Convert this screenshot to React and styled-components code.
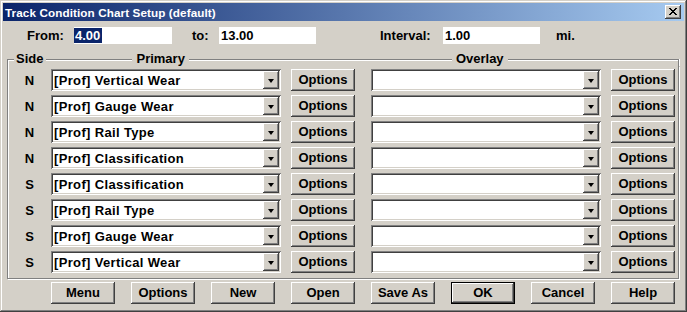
import React from "react";
import styled, { createGlobalStyle } from "styled-components";

const face = "#d4d0c8";

const raised = `
  box-shadow: inset -1px -1px #404040, inset 1px 1px #ffffff,
    inset -2px -2px #808080, inset 2px 2px ${face};
`;

const sunken = `
  box-shadow: inset 1px 1px #808080, inset -1px -1px #ffffff,
    inset 2px 2px #404040, inset -2px -2px ${face};
`;

const GlobalStyle = createGlobalStyle`
  html, body {
    margin: 0;
    padding: 0;
    background: ${face};
  }
  body {
    font-family: "Liberation Sans", Arial, sans-serif;
  }
`;

const rows = [
  ["N", "[Prof] Vertical Wear"],
  ["N", "[Prof] Gauge Wear"],
  ["N", "[Prof] Rail Type"],
  ["N", "[Prof] Classification"],
  ["S", "[Prof] Classification"],
  ["S", "[Prof] Rail Type"],
  ["S", "[Prof] Gauge Wear"],
  ["S", "[Prof] Vertical Wear"],
];

const footer = ["Menu", "Options", "New", "Open", "Save As", "OK", "Cancel", "Help"];

function CloseGlyph() {
  const cells = [
    [0, 0], [1, 0], [6, 0], [7, 0],
    [1, 1], [2, 1], [5, 1], [6, 1],
    [2, 2], [3, 2], [4, 2], [5, 2],
    [3, 3], [4, 3],
    [2, 4], [3, 4], [4, 4], [5, 4],
    [1, 5], [2, 5], [5, 5], [6, 5],
    [0, 6], [1, 6], [6, 6], [7, 6],
  ];
  return (
    <svg width="8" height="7" viewBox="0 0 8 7" shapeRendering="crispEdges">
      {cells.map(([x, y]) => (
        <rect key={`${x}-${y}`} x={x} y={y} width="1" height="1" fill="#000" />
      ))}
    </svg>
  );
}

export default function App() {
  return (
    <>
      <GlobalStyle />
      <Window>
        <TitleBar>
          <span>Track Condition Chart Setup (default)</span>
          <CloseBox>
            <CloseGlyph />
          </CloseBox>
        </TitleBar>

        <TopRow>
          <FieldLabel $w={47}>From:</FieldLabel>
          <TextField $w={98}>
            <Selected>4.00</Selected>
          </TextField>
          <FieldLabel $w={27} $ml={20}>to:</FieldLabel>
          <TextField $w={97}>13.00</TextField>
          <FieldLabel $w={63} $ml={64}>Interval:</FieldLabel>
          <TextField $w={97}>1.00</TextField>
          <FieldLabel $ml={16}>mi.</FieldLabel>
        </TopRow>

        <Group>
          <GroupHeader>
            <HeaderLine $w={7} $edge="left" />
            <HeaderLabel $pl={2} $pr={3}>Side</HeaderLabel>
            <HeaderLine $w={86} />
            <HeaderLabel $pl={4} $pr={4}>Primary</HeaderLabel>
            <HeaderLine $w={263} />
            <HeaderLabel $pl={4} $pr={4}>Overlay</HeaderLabel>
            <HeaderLine $edge="right" />
          </GroupHeader>
          <GroupBody>
            {rows.map(([side, name], i) => (
              <React.Fragment key={i}>
                <SideCell>{side}</SideCell>
                <Combo>
                  <ComboText>{name}</ComboText>
                  <DropButton>
                    <Arrow />
                  </DropButton>
                </Combo>
                <Button>Options</Button>
                <Combo>
                  <ComboText />
                  <DropButton>
                    <Arrow />
                  </DropButton>
                </Combo>
                <Button>Options</Button>
              </React.Fragment>
            ))}
          </GroupBody>
        </Group>

        <ButtonBar>
          {footer.map((label) => (
            <Button key={label} $default={label === "OK"}>
              {label}
            </Button>
          ))}
        </ButtonBar>
      </Window>
    </>
  );
}

const Window = styled.div`
  width: 687px;
  height: 312px;
  box-sizing: border-box;
  padding: 3px;
  background: ${face};
  box-shadow: inset -1px -1px #404040, inset 1px 1px ${face},
    inset -2px -2px #808080, inset 2px 2px #ffffff;
  display: flex;
  flex-direction: column;
  color: #000;
`;

const TitleBar = styled.div`
  height: 18px;
  display: flex;
  align-items: center;
  justify-content: space-between;
  padding: 0 3px 0 2px;
  background: linear-gradient(to right, #0a246a, #a6caf0);
  color: #ffffff;
  font-weight: bold;
  font-size: 11.7px;
  letter-spacing: 0.1px;
`;

const CloseBox = styled.div`
  width: 16px;
  height: 14px;
  box-sizing: border-box;
  background: ${face};
  ${raised}
  display: flex;
  align-items: center;
  justify-content: center;
  padding: 0 1px 1px 0;
`;

const TopRow = styled.div`
  display: flex;
  align-items: center;
  height: 17px;
  margin-top: 6px;
  padding-left: 24px;
`;

const FieldLabel = styled.div`
  width: ${(p) => (p.$w ? `${p.$w}px` : "auto")};
  margin-left: ${(p) => p.$ml || 0}px;
  font-weight: bold;
  font-size: 13px;
`;

const TextField = styled.div`
  width: ${(p) => p.$w}px;
  height: 17px;
  box-sizing: border-box;
  background: #ffffff;
  padding-left: 2px;
  display: flex;
  align-items: center;
  font-weight: bold;
  font-size: 13px;
`;

const Selected = styled.span`
  background: #0a246a;
  color: #ffffff;
  margin-left: -2px;
  padding: 0 2px 0 1px;
  line-height: 15px;
`;

const Group = styled.div`
  width: 672px;
  margin: 8px 0 0 4px;
`;

const GroupHeader = styled.div`
  display: flex;
  height: 14px;
`;

const HeaderLine = styled.div`
  ${(p) => (p.$w ? `width: ${p.$w}px; flex: none;` : "flex: 1;")}
  box-sizing: border-box;
  margin-top: 7px;
  border-top: 1px solid #808080;
  box-shadow: inset 0 1px #ffffff;
  ${(p) =>
    p.$edge === "left" &&
    `border-left: 1px solid #808080; box-shadow: inset 1px 1px #ffffff;`}
  ${(p) =>
    p.$edge === "right" &&
    `border-right: 1px solid #808080; box-shadow: inset 0 1px #ffffff, 1px 0 #ffffff;`}
`;

const HeaderLabel = styled.div`
  padding: 0 ${(p) => p.$pr}px 0 ${(p) => p.$pl}px;
  font-weight: bold;
  font-size: 13px;
  line-height: 14px;
`;

const GroupBody = styled.div`
  border: 1px solid #808080;
  border-top: none;
  box-shadow: inset 1px 0 #ffffff, 1px 1px #ffffff;
  padding: 3px 0 5px 0;
  display: grid;
  grid-template-columns: 43px 230px 74px 246px 74px;
  row-gap: 4px;
  justify-items: end;
  align-items: center;
`;

const SideCell = styled.div`
  justify-self: center;
  font-weight: bold;
  font-size: 13px;
`;

const Combo = styled.div`
  width: 230px;
  height: 22px;
  box-sizing: border-box;
  padding: 2px;
  background: #ffffff;
  ${sunken}
  display: flex;
`;

const ComboText = styled.div`
  flex: 1;
  display: flex;
  align-items: center;
  padding-left: 1px;
  font-weight: bold;
  font-size: 13px;
  letter-spacing: 0.35px;
  white-space: nowrap;
`;

const DropButton = styled.div`
  width: 16px;
  background: ${face};
  ${raised}
  display: flex;
  align-items: center;
  justify-content: center;
`;

const Arrow = styled.div`
  width: 0;
  height: 0;
  border-left: 3.5px solid transparent;
  border-right: 3.5px solid transparent;
  border-top: 4px solid #000;
  margin-top: 1px;
`;

const Button = styled.div`
  width: 64px;
  height: 22px;
  box-sizing: border-box;
  background: ${face};
  ${raised}
  ${(p) =>
    p.$default &&
    `box-shadow: inset 0 0 0 1px #000, inset -2px -2px #404040, inset 2px 2px #ffffff,
      inset -3px -3px #808080;`}
  display: flex;
  align-items: center;
  justify-content: center;
  font-weight: bold;
  font-size: 13px;
  padding-bottom: 1px;
`;

const ButtonBar = styled.div`
  display: flex;
  gap: 16px;
  padding-left: 48px;
  margin-top: 3px;
`;
